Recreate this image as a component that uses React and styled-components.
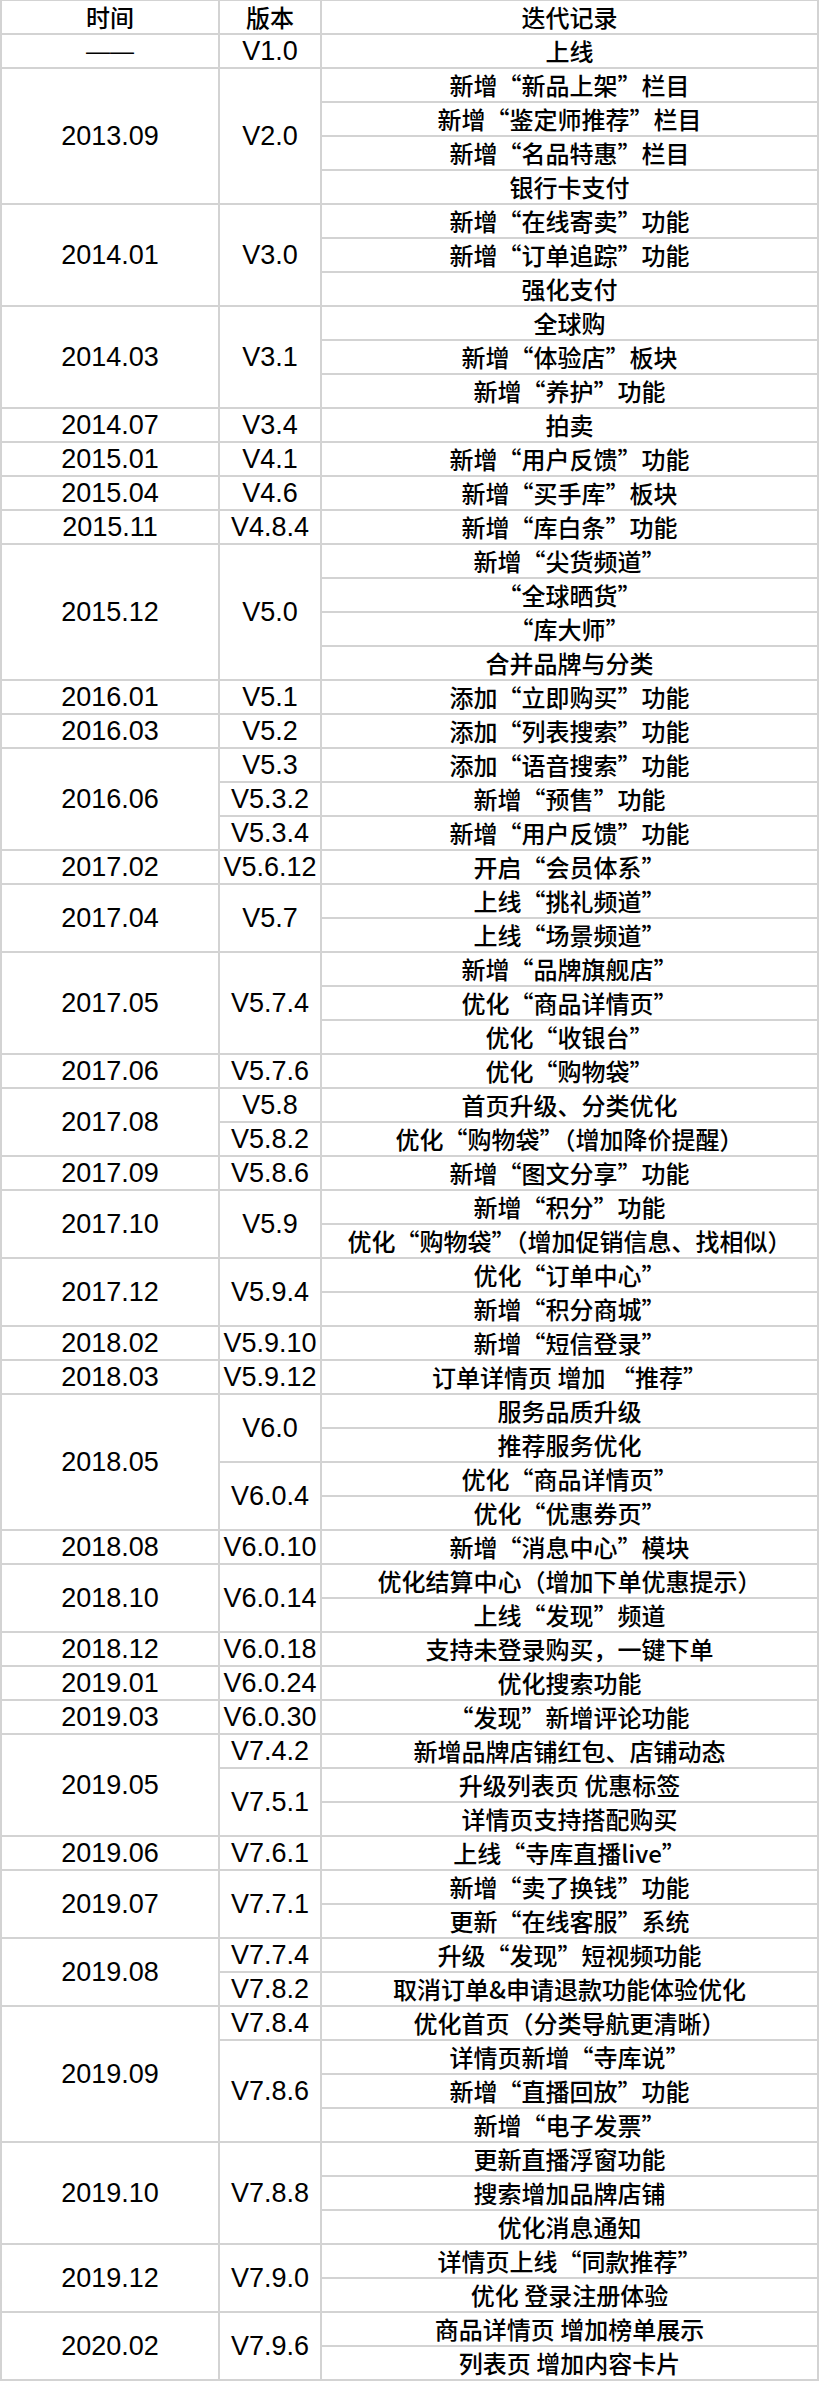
import React from "react";
import styled, { createGlobalStyle } from "styled-components";

const Global = createGlobalStyle`
  html, body { margin: 0; padding: 0; background: #ffffff; }
  body { color: #000; }
`;

const LINE = "#d3d3d3";
const CJK = `"Noto Sans CJK SC", "Noto Sans", sans-serif`;
const LATIN = `"Liberation Sans", Arial, "Noto Sans CJK SC", sans-serif`;

const fonts = {
  cjk: { family: CJK, size: "24px" },
  latin: { family: LATIN, size: "27px" },
  dash: { family: `"Liberation Sans", Arial, sans-serif`, size: "24px" },
};

const Sheet = styled.div`
  width: 819px;
  box-sizing: border-box;
  border-top: 1px solid ${LINE};
  border-left: 2px solid ${LINE};
  display: flex;
  flex-direction: column;
`;

const Group = styled.div`
  display: flex;
  border-bottom: 2px solid ${LINE};
`;

const Cell = styled.div`
  box-sizing: content-box;
  width: ${(p) => p.$w}px;
  flex: none;
  border-right: 2px solid ${LINE};
  display: flex;
  align-items: center;
  justify-content: center;
  white-space: nowrap;
  font-family: ${(p) => fonts[p.$font || "latin"].family};
  font-size: ${(p) => fonts[p.$font || "latin"].size};
  font-weight: 500;
  line-height: 32px;
`;

const HeaderCell = styled(Cell)`
  height: 32px;
`;

const VersionStack = styled.div`
  display: flex;
  flex-direction: column;
  flex: none;
`;

const VersionBlock = styled.div`
  display: flex;
  & + & {
    border-top: 2px solid ${LINE};
  }
`;

const Items = styled.div`
  display: flex;
  flex-direction: column;
  width: 497px;
`;

const Item = styled(Cell)`
  height: 32px;
  & + & {
    border-top: 2px solid ${LINE};
  }
`;

const data = [
  { t: "——", v: [["V1.0", ["上线"]]] },
  { t: "2013.09", v: [["V2.0", ["新增“新品上架”栏目", "新增“鉴定师推荐”栏目", "新增“名品特惠”栏目", "银行卡支付"]]] },
  { t: "2014.01", v: [["V3.0", ["新增“在线寄卖”功能", "新增“订单追踪”功能", "强化支付"]]] },
  { t: "2014.03", v: [["V3.1", ["全球购", "新增“体验店”板块", "新增“养护”功能"]]] },
  { t: "2014.07", v: [["V3.4", ["拍卖"]]] },
  { t: "2015.01", v: [["V4.1", ["新增“用户反馈”功能"]]] },
  { t: "2015.04", v: [["V4.6", ["新增“买手库”板块"]]] },
  { t: "2015.11", v: [["V4.8.4", ["新增“库白条”功能"]]] },
  { t: "2015.12", v: [["V5.0", ["新增“尖货频道”", "“全球晒货”", "“库大师”", "合并品牌与分类"]]] },
  { t: "2016.01", v: [["V5.1", ["添加“立即购买”功能"]]] },
  { t: "2016.03", v: [["V5.2", ["添加“列表搜索”功能"]]] },
  {
    t: "2016.06",
    v: [
      ["V5.3", ["添加“语音搜索”功能"]],
      ["V5.3.2", ["新增“预售”功能"]],
      ["V5.3.4", ["新增“用户反馈”功能"]],
    ],
  },
  { t: "2017.02", v: [["V5.6.12", ["开启“会员体系”"]]] },
  { t: "2017.04", v: [["V5.7", ["上线“挑礼频道”", "上线“场景频道”"]]] },
  { t: "2017.05", v: [["V5.7.4", ["新增“品牌旗舰店”", "优化“商品详情页”", "优化“收银台”"]]] },
  { t: "2017.06", v: [["V5.7.6", ["优化“购物袋”"]]] },
  {
    t: "2017.08",
    v: [
      ["V5.8", ["首页升级、分类优化"]],
      ["V5.8.2", ["优化“购物袋”（增加降价提醒）"]],
    ],
  },
  { t: "2017.09", v: [["V5.8.6", ["新增“图文分享”功能"]]] },
  { t: "2017.10", v: [["V5.9", ["新增“积分”功能", "优化“购物袋”（增加促销信息、找相似）"]]] },
  { t: "2017.12", v: [["V5.9.4", ["优化“订单中心”", "新增“积分商城”"]]] },
  { t: "2018.02", v: [["V5.9.10", ["新增“短信登录”"]]] },
  { t: "2018.03", v: [["V5.9.12", ["订单详情页 增加 “推荐”"]]] },
  {
    t: "2018.05",
    v: [
      ["V6.0", ["服务品质升级", "推荐服务优化"]],
      ["V6.0.4", ["优化“商品详情页”", "优化“优惠券页”"]],
    ],
  },
  { t: "2018.08", v: [["V6.0.10", ["新增“消息中心”模块"]]] },
  { t: "2018.10", v: [["V6.0.14", ["优化结算中心（增加下单优惠提示）", "上线“发现”频道"]]] },
  { t: "2018.12", v: [["V6.0.18", ["支持未登录购买，一键下单"]]] },
  { t: "2019.01", v: [["V6.0.24", ["优化搜索功能"]]] },
  { t: "2019.03", v: [["V6.0.30", ["“发现”新增评论功能"]]] },
  {
    t: "2019.05",
    v: [
      ["V7.4.2", ["新增品牌店铺红包、店铺动态"]],
      ["V7.5.1", ["升级列表页 优惠标签", "详情页支持搭配购买"]],
    ],
  },
  { t: "2019.06", v: [["V7.6.1", ["上线“寺库直播live”"]]] },
  { t: "2019.07", v: [["V7.7.1", ["新增“卖了换钱”功能", "更新“在线客服”系统"]]] },
  {
    t: "2019.08",
    v: [
      ["V7.7.4", ["升级“发现”短视频功能"]],
      ["V7.8.2", ["取消订单&申请退款功能体验优化"]],
    ],
  },
  {
    t: "2019.09",
    v: [
      ["V7.8.4", ["优化首页（分类导航更清晰）"]],
      ["V7.8.6", ["详情页新增“寺库说”", "新增“直播回放”功能", "新增“电子发票”"]],
    ],
  },
  { t: "2019.10", v: [["V7.8.8", ["更新直播浮窗功能", "搜索增加品牌店铺", "优化消息通知"]]] },
  { t: "2019.12", v: [["V7.9.0", ["详情页上线“同款推荐”", "优化 登录注册体验"]]] },
  { t: "2020.02", v: [["V7.9.6", ["商品详情页 增加榜单展示", "列表页 增加内容卡片"]]] },
];

export default function App() {
  return (
    <>
      <Global />
      <Sheet>
        <Group>
          <HeaderCell $w={216} $font="cjk">时间</HeaderCell>
          <HeaderCell $w={100} $font="cjk">版本</HeaderCell>
          <HeaderCell $w={495} $font="cjk">迭代记录</HeaderCell>
        </Group>
        {data.map((g) => (
          <Group key={g.t}>
            <Cell $w={216} $font={g.t === "——" ? "dash" : "latin"}>
              {g.t}
            </Cell>
            <VersionStack>
              {g.v.map(([ver, items]) => (
                <VersionBlock key={ver}>
                  <Cell $w={100}>{ver}</Cell>
                  <Items>
                    {items.map((it) => (
                      <Item key={it} $w={495} $font="cjk">
                        {it}
                      </Item>
                    ))}
                  </Items>
                </VersionBlock>
              ))}
            </VersionStack>
          </Group>
        ))}
      </Sheet>
    </>
  );
}
